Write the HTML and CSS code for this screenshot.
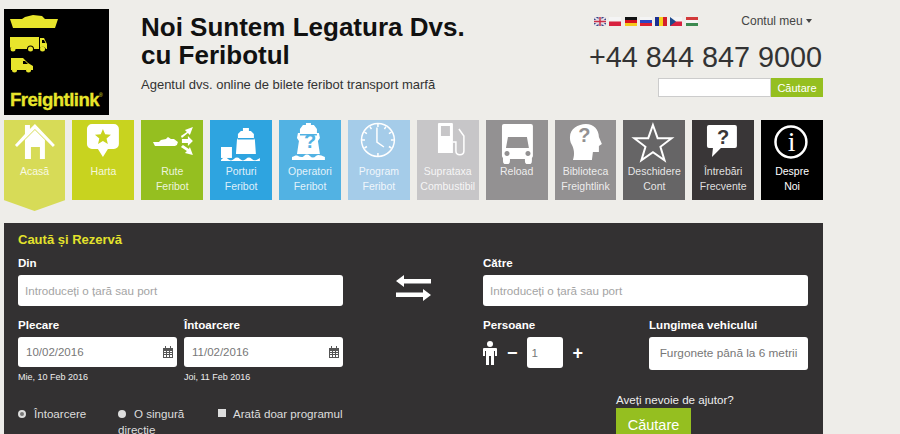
FILE: index.html
```html
<!DOCTYPE html>
<html lang="ro">
<head>
    <meta charset="UTF-8">
    <meta name="viewport" content="width=device-width, initial-scale=1.0">
    <title>Freightlink</title>
    <link rel="stylesheet" href="styles.css">
</head>
<body>
    <div class="page">
        <header class="site-header">
            <a class="logo" href="#">
                <svg class="logo-art" viewBox="0 0 105 72" width="105" height="72">
                    <path d="M18 10l3-2 8-2 9 1 3 3h13l-3 9H9l-3-9z"/>
                    <path d="M6 28h29v12h-5a3.500 3.500 0 0 0-7 0H11a3 3 0 0 0-5-1z"/>
                    <circle cx="9" cy="40" r="2.500"/><circle cx="26.500" cy="40" r="2.500"/><circle cx="38.500" cy="40" r="2.500"/>
                    <path fill-rule="evenodd" d="M36 29h4l3 6v5h-1a3.500 3.500 0 0 0-6-1zm2 2v3h3.500l-1.500-3z"/>
                    <path fill-rule="evenodd" d="M7 49h12l5 5 5 3v4h-2a3 3 0 0 0-5 0H13a3 3 0 0 0-5 0H7zm12 3v3h5l-3-3z"/>
                    <circle cx="10.500" cy="61" r="2.500"/><circle cx="24.500" cy="61" r="2.500"/>
                </svg>
                <span class="logo-name">Freightlink<sup>®</sup></span>
            </a>
            <div class="brand-text">
                <h1>Noi Suntem Legatura Dvs.<br>cu Feribotul</h1>
                <p>Agentul dvs. online de bilete feribot transport marfă</p>
            </div>
            <div class="header-tools">
                <div class="tools-top">
                    <div class="flags">
                        <svg viewBox="0 0 12 9" class="flag"><rect width="12" height="9" fill="#3a4a8c"/><path d="M0 0l12 9M12 0L0 9" stroke="#e6dfe6" stroke-width="2"/><path d="M6 0v9M0 4.500h12" stroke="#e6dfe6" stroke-width="3"/><path d="M6 0v9M0 4.500h12" stroke="#c9304a" stroke-width="1.500"/></svg>
                        <svg viewBox="0 0 12 9" class="flag"><rect width="12" height="4.500" fill="#f4f4f4"/><rect y="4.500" width="12" height="4.500" fill="#d8213f"/></svg>
                        <svg viewBox="0 0 12 9" class="flag"><rect width="12" height="3" fill="#111"/><rect y="3" width="12" height="3" fill="#d8111c"/><rect y="6" width="12" height="3" fill="#f6c81c"/></svg>
                        <svg viewBox="0 0 12 9" class="flag"><rect width="12" height="3" fill="#f4f4f4"/><rect y="3" width="12" height="3" fill="#2c45c4"/><rect y="6" width="12" height="3" fill="#dc2030"/></svg>
                        <svg viewBox="0 0 12 9" class="flag"><rect width="4" height="9" fill="#1c2f92"/><rect x="4" width="4" height="9" fill="#f6d11c"/><rect x="8" width="4" height="9" fill="#d41f2c"/></svg>
                        <svg viewBox="0 0 12 9" class="flag"><rect width="12" height="4.500" fill="#f4f4f4"/><rect y="4.500" width="12" height="4.500" fill="#d8213f"/><path d="M0 0l6 4.500L0 9z" fill="#1f4a8c"/></svg>
                        <svg viewBox="0 0 12 9" class="flag"><rect width="12" height="3" fill="#d23a3a"/><rect y="3" width="12" height="3" fill="#f4f4f4"/><rect y="6" width="12" height="3" fill="#3c8a50"/></svg>
                    </div>
                    <a class="account" href="#">Contul meu <span class="caret"></span></a>
                </div>
                <div class="phone">+44 844 847 9000</div>
                <form class="site-search">
                    <input type="text">
                    <button type="button">Căutare</button>
                </form>
            </div>
        </header>

        <nav class="tiles">
            <a class="tile tile-home" href="#">
                <svg viewBox="0 0 62 44"><path d="M21 5h5v4l5-5 20 21-2 2-18-18-18 18-2-2 10-11z"/><path d="M21 20l10-10 10 10v19H36V27h-9v12h-6z"/></svg>
                <span>Acasă</span>
            </a>
            <a class="tile tile-map" href="#">
                <svg viewBox="0 0 62 44"><path fill-rule="evenodd" d="M20 4h22a5 5 0 0 1 5 5v15a5 5 0 0 1-5 5h-6l-5 8-5-8h-6a5 5 0 0 1-5-5V9a5 5 0 0 1 5-5zm11 5l-2.200 5.200-5.800.500 4.400 3.800-1.300 5.500 4.900-3 4.900 3-1.300-5.500 4.400-3.800-5.800-.500z"/></svg>
                <span>Harta</span>
            </a>
            <a class="tile tile-routes" href="#">
                <svg viewBox="0 0 62 44"><path d="M12 22h6l2-2 5-1 2-2 3 2h3l4 3-1 3-2 1H14z"/><path d="M40 16l6-4-2-2 8-3-3 8-2-2-6 5zM41 19h6v-3l5 5-5 5v-3h-6zM40 27l2-2 6 4 1-2 3 8-8-2 2-2z"/></svg>
                <span>Rute<br>Feribot</span>
            </a>
            <a class="tile tile-ports" href="#">
                <svg viewBox="0 0 62 44"><path d="M11 27h11v11H11z"/><path fill-rule="evenodd" d="M33 8h6v3h2l3 3v4l1 2 1 14H26l1-14 1-2v-4l3-3h2zm-5 10v1.500h16V18z"/><path d="M11 40c3-3 5-3 7-1s4 2 6 0 4-2 6 0 4 2 6 0 4-2 6 0 4 2 8-1v3H11z"/></svg>
                <span>Porturi<br>Feribot</span>
            </a>
            <a class="tile tile-operators" href="#">
                <svg viewBox="0 0 62 44"><path fill-rule="evenodd" d="M27 3h5v2h3l3 4v4h2l1 5-2 3 2 13H18l2-13-2-3 1-5h2V9l3-4h3zm-6 11v1.500h17V14z"/><path d="M13 37c3-1 4-2 6-1s4 2 6 0 4-2 6 0 4 2 6 0 5-1 9 1v3H13z"/></svg>
                <b class="tile-mark">?</b>
                <span>Operatori<br>Feribot</span>
            </a>
            <a class="tile tile-schedule" href="#">
                <svg viewBox="0 0 62 44"><circle class="line" cx="30" cy="20" r="16.500"/><path class="line" d="M29 7.500V22l7 5M30 4v3M30 33v3M14 20h3M43 20h3M22 6.500l1.500 2.500M38 6.500l-1.500 2.500M16.500 12l2.500 1.500M43.500 12L41 13.500M16.500 28l2.500-1.500M43.500 28L41 26.500"/></svg>
                <span>Program<br>Feribot</span>
            </a>
            <a class="tile tile-fuel" href="#">
                <svg viewBox="0 0 62 44"><path fill-rule="evenodd" d="M22 3h13a1 1 0 0 1 1 1v29H21V4a1 1 0 0 1 1-1zm2 3v10h9V6z"/><path class="line" d="M36 22h3v9c0 5 8 5 8 0V16l-5-7"/></svg>
                <span>Suprataxa<br>Combustibil</span>
            </a>
            <a class="tile tile-reload" href="#">
                <svg viewBox="0 0 62 44"><path fill-rule="evenodd" d="M18 4h27a2 2 0 0 1 2 2v30a3 3 0 0 1-1 2v3a1.500 1.500 0 0 1-7 0v-2H24v2a1.500 1.500 0 0 1-7 0v-3a3 3 0 0 1-1-2V6a2 2 0 0 1 2-2zm4 13l-2 11h23l-2-11zm-1 14a2.500 2.500 0 1 0 .1 0zm21 0a2.500 2.500 0 1 0 .1 0z"/></svg>
                <span>Reload</span>
            </a>
            <a class="tile tile-library" href="#">
                <svg viewBox="0 0 62 44"><path d="M31 4c8 0 13 6 13 13l3 7-3 2v6h-6l-1 8H18c2-6 1-11-1-15-2-3-2-6-2-8 0-8 8-13 16-13z"/></svg>
                <b class="tile-mark tile-mark-dark">?</b>
                <span>Biblioteca<br>Freightlink</span>
            </a>
            <a class="tile tile-account" href="#">
                <svg viewBox="0 0 62 44"><path class="line line-bold" d="M30 5l4.700 13.200h14l-11.200 8.600 4.100 13.600L30 32.300l-11.600 8.100 4.100-13.600-11.200-8.600h14z"/></svg>
                <span>Deschidere<br>Cont</span>
            </a>
            <a class="tile tile-faq" href="#">
                <svg viewBox="0 0 62 44"><path d="M17 5h26a2 2 0 0 1 2 2v19a2 2 0 0 1-2 2H29l-9 9 1-9h-4a2 2 0 0 1-2-2V7a2 2 0 0 1 2-2z"/></svg>
                <b class="tile-mark tile-mark-faq">?</b>
                <span>Întrebări<br>Frecvente</span>
            </a>
            <a class="tile tile-about" href="#">
                <svg viewBox="0 0 62 44"><circle class="line line-bold" cx="30" cy="22" r="15.500"/></svg>
                <b class="tile-mark tile-mark-info">i</b>
                <span>Despre<br>Noi</span>
            </a>
        </nav>

        <section class="booking">
            <div class="booking-col">
                <h2>Caută și Rezervă</h2>
                <label class="field-label">Din</label>
                <input class="field" type="text" placeholder="Introduceți o țară sau port">
                <div class="dates">
                    <div>
                        <label class="field-label">Plecare</label>
                        <div class="date-field">
                            <span>10/02/2016</span>
                            <svg viewBox="0 0 12 12" width="12" height="12"><path d="M1 2h2V0h1v2h4V0h1v2h2v10H1zm1 3v1h2V5zm3 0v1h2V5zm3 0v1h2V5zM2 7v1h2V7zm3 0v1h2V7zm3 0v1h2V7zM2 9v2h2V9zm3 0v2h2V9zm3 0v2h2V9z" fill="#555"/></svg>
                        </div>
                        <small>Mie, 10 Feb 2016</small>
                    </div>
                    <div>
                        <label class="field-label">Întoarcere</label>
                        <div class="date-field">
                            <span>11/02/2016</span>
                            <svg viewBox="0 0 12 12" width="12" height="12"><path d="M1 2h2V0h1v2h4V0h1v2h2v10H1zm1 3v1h2V5zm3 0v1h2V5zm3 0v1h2V5zM2 7v1h2V7zm3 0v1h2V7zm3 0v1h2V7zM2 9v2h2V9zm3 0v2h2V9zm3 0v2h2V9z" fill="#555"/></svg>
                        </div>
                        <small>Joi, 11 Feb 2016</small>
                    </div>
                </div>
                <div class="options">
                    <div class="option option-first"><i class="radio radio-on"></i>Întoarcere</div>
                    <div class="option option-second"><i class="radio"></i>O singură direcție</div>
                    <div class="option option-third"><i class="check"></i>Arată doar programul</div>
                </div>
            </div>

            <div class="swap">
                <svg viewBox="0 0 35 26" width="35" height="26"><path d="M0 6l8-6v4h27v4.500H8V12zM35 20l-8-6v3.500H0V22h27v4z" fill="#fff"/></svg>
            </div>

            <div class="booking-col booking-right">
                <label class="field-label">Către</label>
                <input class="field" type="text" placeholder="Introduceți o țară sau port">
                <div class="party">
                    <div class="persons">
                        <label class="field-label">Persoane</label>
                        <div class="stepper">
                            <svg viewBox="0 0 14 24" width="14" height="24"><circle cx="7" cy="3" r="3" fill="#fff"/><path d="M1 7h12a1 1 0 0 1 1 1v7h-2v-5h-1v14H8V15H6v9H3V10H2v5H0V8a1 1 0 0 1 1-1z" fill="#fff"/></svg>
                            <b class="step-sign">−</b>
                            <input class="step-value" type="text" value="1">
                            <b class="step-sign">+</b>
                        </div>
                    </div>
                    <div class="vehicle">
                        <label class="field-label">Lungimea vehicului</label>
                        <div class="vehicle-select">Furgonete până la 6 metrii</div>
                    </div>
                </div>
                <div class="submit-area">
                    <a class="help" href="#">Aveți nevoie de ajutor?</a>
                    <button class="submit" type="button">Căutare</button>
                </div>
            </div>
        </section>
    </div>
</body>
</html>
```

FILE: styles.css
```css
html, body {
    margin: 0;
    padding: 0;
    height: 434px;
    overflow: hidden;
}

body {
    background-color: #eeede9;
    font-family: "Liberation Sans", Arial, sans-serif;
    color: #333;
}

a {
    text-decoration: none;
}

.page {
    width: 819px;
    margin-left: 4px;
}

/* header */
.site-header {
    display: flex;
    height: 120px;
}

.logo {
    width: 105px;
    height: 106px;
    margin-top: 9px;
    background-color: #000;
    color: #e8e52c;
    display: flex;
    flex-direction: column;
    flex-shrink: 0;
}

.logo-art {
    display: block;
    flex-shrink: 0;
    fill: #e8e52c;
}

.logo-name {
    font-size: 18.600px;
    font-weight: bold;
    letter-spacing: -0.55px;
    -webkit-text-stroke: 0.3px #e8e52c;
    line-height: 24px;
    padding-left: 6px;
    margin-top: 7px;
    white-space: nowrap;
}

.logo-name sup {
    font-size: 5px;
    font-weight: normal;
    vertical-align: 9px;
    line-height: 0;
    -webkit-text-stroke: 0;
}

.brand-text {
    margin-left: 32px;
    padding-top: 13px;
    flex-grow: 1;
}

.brand-text h1 {
    margin: 0;
    font-size: 26px;
    line-height: 28px;
    color: #111;
}

.brand-text p {
    margin: 8px 0 0;
    font-size: 13px;
    line-height: 16px;
    color: #333;
}

.header-tools {
    width: 234px;
    flex-shrink: 0;
}

.tools-top {
    display: flex;
    justify-content: space-between;
    padding: 14px 11px 0 5px;
    height: 15px;
}

.flags {
    display: flex;
    gap: 3.300px;
    padding-top: 3px;
}

.flag {
    width: 12px;
    height: 9px;
}

.account {
    font-size: 12px;
    line-height: 14px;
    color: #444;
}

.caret {
    display: inline-block;
    border-top: 4px solid #444;
    border-left: 3.500px solid transparent;
    border-right: 3.500px solid transparent;
    vertical-align: 2px;
}

.phone {
    font-size: 28.800px;
    line-height: 34px;
    margin-top: 11px;
    color: #333;
    white-space: nowrap;
}

.site-search {
    display: flex;
    justify-content: flex-end;
    margin-top: 4px;
}

.site-search input {
    width: 113px;
    height: 19px;
    box-sizing: border-box;
    border: 1px solid #ccc;
    background-color: #fff;
    padding: 0;
}

.site-search button {
    width: 52px;
    height: 19px;
    padding: 0;
    border: none;
    background-color: #95bf20;
    color: #fff;
    font-family: inherit;
    font-size: 11px;
}

/* nav tiles */
.tiles {
    display: grid;
    grid-template-columns: repeat(12, 1fr);
    gap: 7px;
    align-items: start;
    height: 103px;
    margin-left: -0.4px;
}

.tile {
    position: relative;
    height: 80px;
    color: rgba(255, 255, 255, 0.85);
    font-size: 10.500px;
    line-height: 15px;
    text-align: center;
    white-space: nowrap;
    display: block;
    fill: #fff;
}

.tile svg {
    display: block;
    width: 100%;
    height: 44px;
}

.tile span {
    display: block;
}

.tile .line {
    fill: none;
    stroke: #fff;
    stroke-width: 1.500;
}

.tile .line-bold {
    stroke-width: 2;
}

.tile-about .line-bold {
    stroke-width: 2.500;
}

.tile-mark {
    position: absolute;
    left: 0;
    right: 0;
    top: 9px;
    font-size: 20px;
    line-height: 24px;
    text-align: center;
    color: #52b2e3;
}

.tile-mark-dark {
    top: 3px;
    color: #939192;
    margin-left: -2px;
}

.tile-mark-faq {
    top: 5px;
    color: #393637;
}

.tile-mark-info {
    top: 8px;
    font-family: "Liberation Serif", serif;
    font-weight: normal;
    font-size: 28px;
    line-height: 28px;
    color: #fff;
    margin-left: -1px;
}

.tile-home {
    height: 91px;
    background-color: #d7db57;
    clip-path: polygon(0 0, 100% 0, 100% 88%, 50% 100%, 0 88%);
}

.tile-map { background-color: #c8d31f; fill: #fff; }
.tile-routes { background-color: #95bf20; }
.tile-ports { background-color: #2ea4e0; }
.tile-operators { background-color: #52b2e3; }
.tile-schedule { background-color: #a5cce9; }
.tile-fuel { background-color: #c7c6c8; }
.tile-reload { background-color: #939192; }
.tile-library { background-color: #939192; }
.tile-account { background-color: #666566; }
.tile-faq { background-color: #393637; }
.tile-about { background-color: #000; color: #fff; }

/* booking panel */
.booking {
    display: grid;
    grid-template-columns: 325px 140px 325px;
    height: 211px;
    padding: 0 15px 0 14px;
    background-color: #333132;
    color: #fff;
    overflow: hidden;
}

.booking h2 {
    margin: 0;
    padding-top: 9px;
    font-size: 13px;
    line-height: 15px;
    color: #e3e22c;
}

.field-label {
    display: block;
    font-size: 11.600px;
    font-weight: bold;
    line-height: 14px;
}

.booking h2 + .field-label {
    margin-top: 9px;
}

.booking-right {
    padding-top: 33px;
}

.field {
    display: block;
    width: 100%;
    height: 31px;
    box-sizing: border-box;
    margin-top: 5px;
    padding: 0 7px;
    border: none;
    border-radius: 3px;
    background-color: #fff;
    font-family: inherit;
    font-size: 11.600px;
}

.field::placeholder {
    color: #a4a4a4;
}

.dates {
    display: grid;
    grid-template-columns: 159px 159px;
    gap: 7px;
    margin-top: 12px;
}

.date-field {
    display: flex;
    align-items: center;
    justify-content: space-between;
    height: 30px;
    margin-top: 5px;
    padding: 0 3px 0 8px;
    border-radius: 3px;
    background-color: #fff;
    color: #777;
    font-size: 11.500px;
}

.booking small {
    display: block;
    margin-top: 5px;
    font-size: 9px;
    line-height: 11px;
    color: #eee;
}

.options {
    display: flex;
    margin-top: 23px;
    font-size: 11.600px;
    line-height: 16px;
    color: #ddd;
}

.option-first { width: 100px; }
.option-second { width: 100px; }
.option-third { white-space: nowrap; }

.radio {
    display: inline-block;
    width: 8px;
    height: 8px;
    margin-right: 8px;
    border-radius: 50%;
    background-color: #ddd;
}

.radio-on {
    box-sizing: border-box;
    border: 2px solid #ddd;
    background-color: #777;
}

.check {
    display: inline-block;
    width: 8px;
    height: 8px;
    margin-right: 7px;
    vertical-align: 1px;
    background-color: #ddd;
}

.swap {
    display: flex;
    justify-content: center;
    padding-top: 52px;
}

.swap svg {
    display: block;
}

.party {
    display: flex;
    justify-content: space-between;
    margin-top: 12px;
}

.stepper {
    display: flex;
    align-items: center;
    gap: 10px;
    margin-top: 5px;
    height: 31px;
}

.step-sign {
    font-size: 18px;
    line-height: 18px;
}

.step-value {
    width: 36px;
    height: 31px;
    box-sizing: border-box;
    margin-left: -1px;
    padding: 0 5px;
    border: none;
    border-radius: 3px;
    background-color: #fff;
    color: #777;
    font-family: inherit;
    font-size: 11.600px;
}

.vehicle {
    width: 159px;
}

.vehicle-select {
    height: 33px;
    margin-top: 5px;
    border-radius: 3px;
    background-color: #fff;
    color: #777;
    font-size: 11.800px;
    line-height: 33px;
    text-align: center;
}

.submit-area {
    display: flex;
    flex-direction: column;
    align-items: flex-start;
    margin: 22px 0 0 133px;
}

.help {
    font-size: 11.600px;
    line-height: 15px;
    color: #eee;
}

.submit {
    width: 75px;
    height: 34px;
    margin-top: 1px;
    border: none;
    padding: 0;
    background-color: #95bf20;
    color: #fff;
    font-family: inherit;
    font-size: 14.500px;
}
```
